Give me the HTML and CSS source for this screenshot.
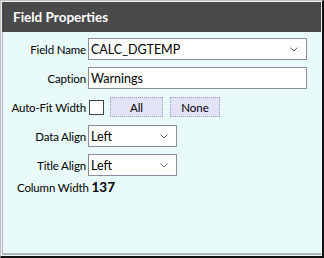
FILE: index.html
```html
<!DOCTYPE html>
<html>
<head>
<meta charset="utf-8">
<link rel="stylesheet" href="styles.css">
</head>
<body>
<div class="frame">
  <div class="header">Field Properties</div>
  <div class="panel">
    <div class="form">
      <label class="lbl">Field Name</label>
      <div class="select wide"><span>CALC_DGTEMP</span><svg class="chev" width="8" height="5" viewBox="0 0 8 5"><path d="M0.5 0.5 L4 4 L7.5 0.5" fill="none" stroke="#666" stroke-width="1"/></svg></div>
      <label class="lbl">Caption</label>
      <div class="input wide">Warnings</div>
      <label class="lbl">Auto-Fit Width</label>
      <div class="ctrlrow"><span class="check"></span><span class="btn all">All</span><span class="btn none">None</span></div>
      <label class="lbl">Data Align</label>
      <div class="select narrow"><span>Left</span><svg class="chev" width="8" height="5" viewBox="0 0 8 5"><path d="M0.5 0.5 L4 4 L7.5 0.5" fill="none" stroke="#666" stroke-width="1"/></svg></div>
      <label class="lbl">Title Align</label>
      <div class="select narrow"><span>Left</span><svg class="chev" width="8" height="5" viewBox="0 0 8 5"><path d="M0.5 0.5 L4 4 L7.5 0.5" fill="none" stroke="#666" stroke-width="1"/></svg></div>
    </div>
    <div class="colwidth">Column Width <b>137</b></div>
  </div>
</div>
</body>
</html>
```
FILE: styles.css
```css
html, body { margin: 0; padding: 0; background: #fff; }
body { font-family: Lato, "Noto Sans", sans-serif; font-size: 11.5px; color: #000; }
.frame {
  width: 324px; height: 258px; box-sizing: border-box;
  border-top: 1px solid #c0c0c0; border-left: 1px solid #c0c0c0;
  border-right: 2px solid #111; border-bottom: 2px solid #111;
  padding: 1px; display: flex; flex-direction: column; background: #f4f4f4;
}
.header {
  height: 30px; flex: none; background: #4a4a4a; color: #fff;
  font-weight: bold; font-size: 13.5px; padding-left: 11px;
  display: flex; align-items: center;
}
.panel {
  flex: 1; background: #e8fafa;
  border-left: 1px solid #b0b0d8; border-bottom: 2px solid #a8b8b8;
  padding-top: 6px;
}
.form {
  display: grid; grid-template-columns: 83px auto; column-gap: 2px; row-gap: 7px;
  align-items: center;
}
.lbl { text-align: right; white-space: nowrap; letter-spacing: -0.15px; }
.select, .input {
  height: 22px; box-sizing: border-box; background: #fff;
  border: 1px solid #8c8ca0; display: flex; align-items: center; padding-left: 2px;
  font-size: 12.5px;
}
.select { justify-content: space-between; padding-right: 8px; }
.wide { width: 219px; }
.narrow { width: 89px; }
.ctrlrow { display: flex; align-items: center; height: 22px; }
.check { width: 13px; height: 13px; border: 1px solid #444; background: #fff; margin-left: 1px; }
.btn {
  height: 20px; box-sizing: border-box; background: #e2e2f8;
  border: 1px dotted #9a9ab4; display: flex; align-items: center; justify-content: center;
}
.all { width: 53px; margin-left: 6px; }
.none { width: 50px; margin-left: 7px; }
.colwidth { margin: 3px 0 0 14px; letter-spacing: -0.15px; }
.colwidth b { font-size: 13.5px; letter-spacing: 0; }
```
